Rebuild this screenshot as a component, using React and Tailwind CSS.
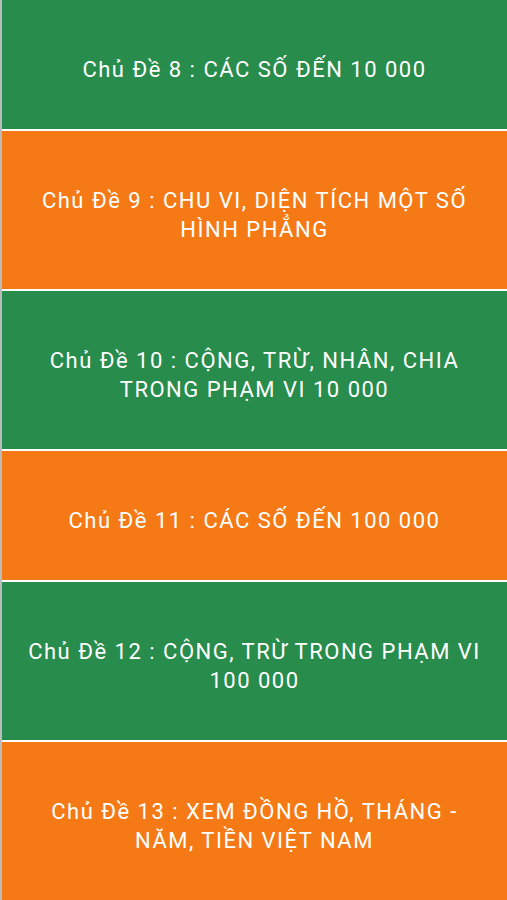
import React from "react";

const topics = [
  { title: "Chủ Đề 8 : CÁC SỐ ĐẾN 10 000", color: "green" },
  { title: "Chủ Đề 9 : CHU VI, DIỆN TÍCH MỘT SỐ HÌNH PHẲNG", color: "orange" },
  { title: "Chủ Đề 10 : CỘNG, TRỪ, NHÂN, CHIA TRONG PHẠM VI 10 000", color: "green" },
  { title: "Chủ Đề 11 : CÁC SỐ ĐẾN 100 000", color: "orange" },
  { title: "Chủ Đề 12 : CỘNG, TRỪ TRONG PHẠM VI 100 000", color: "green" },
  { title: "Chủ Đề 13 : XEM ĐỒNG HỒ, THÁNG - NĂM, TIỀN VIỆT NAM", color: "orange" },
];

export default function App() {
  return (
    <div className="w-[507px] h-[900px] overflow-hidden bg-white border-l-2 border-[#b9bcb8] font-['Roboto',sans-serif]">
      <div className="flex flex-col gap-[2px]">
        {topics.map((topic, index) => (
          <div
            key={index}
            className={`px-5 pt-[55px] pb-[45px] text-center text-white text-[22px] leading-[29px] tracking-[1.5px] ${
              topic.color === "green" ? "bg-[#288c4c]" : "bg-[#f57a16]"
            }`}
          >
            {topic.title}
          </div>
        ))}
      </div>
    </div>
  );
}
